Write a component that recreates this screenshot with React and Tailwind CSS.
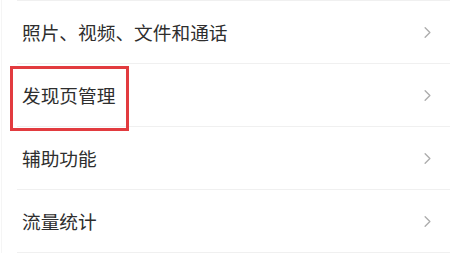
import { ChevronRight } from "lucide-react";

const rows = ["照片、视频、文件和通话", "发现页管理", "辅助功能", "流量统计"];

function SettingRow({ label }) {
  return (
    <div className="ml-[15px] flex h-[63px] items-center justify-between border-b border-[#f0f0f0] pl-[5px] pr-[13px]">
      <span className="text-[18.7px] leading-none text-[#2e2e2e]">{label}</span>
      <ChevronRight className="size-[19px] text-[#adadad]" strokeWidth={1.7} aria-hidden="true" />
    </div>
  );
}

export default function App() {
  return (
    <div
      className="relative h-[260px] w-[450px] overflow-hidden bg-white"
      style={{ fontFamily: '"Noto Sans CJK SC", "Noto Sans", sans-serif' }}
    >
      <div className="ml-[1px] border-l border-[#f5f5f5]">
        <div className="ml-[15px] h-[1px] bg-[#f0f0f0]" />
        {rows.map((label) => (
          <SettingRow key={label} label={label} />
        ))}
      </div>
      {/* annotation box */}
      <div className="pointer-events-none absolute left-[10px] top-[66px] h-[65px] w-[119px] border-[3px] border-[#e23b3f]" />
    </div>
  );
}
